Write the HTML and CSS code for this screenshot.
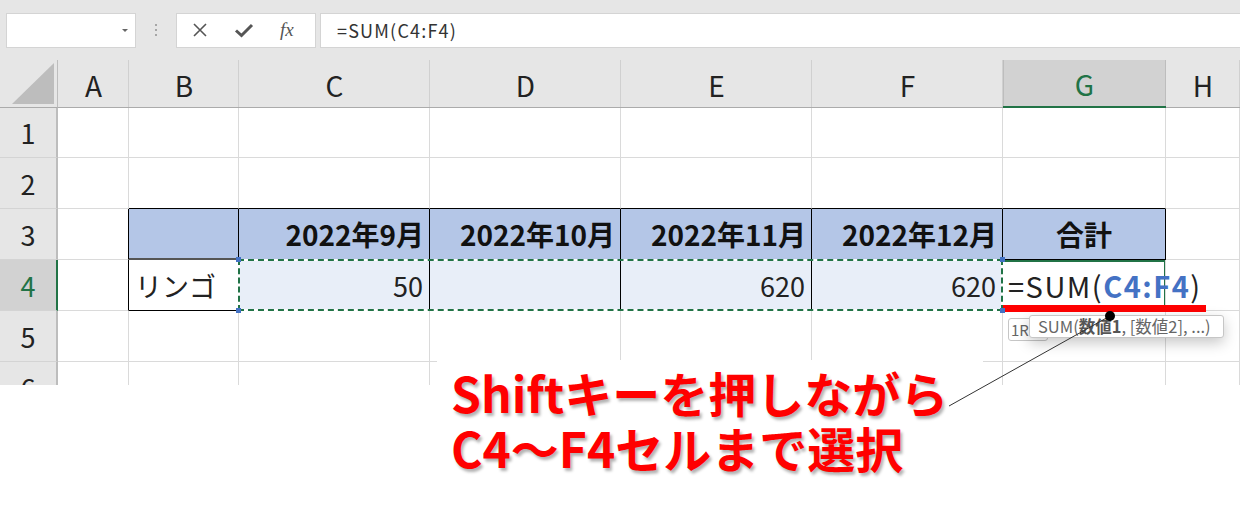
FILE: index.html
```html
<!DOCTYPE html>
<html lang="ja">

<head>
  <meta charset="UTF-8">
  <meta name="viewport" content="width=device-width, initial-scale=1.0">
  <title>SUM関数 範囲選択</title>
  <link rel="stylesheet" href="styles.css">
</head>

<body>
  <div class="toolbar">
    <div class="name-box"><span class="drop"></span></div>
    <div class="grip"><i></i><i></i><i></i></div>
    <div class="fx-buttons">
      <svg class="ico" width="16" height="16" viewBox="0 0 16 16"><path d="M2 2L14 14M14 2L2 14" stroke="#555" stroke-width="1.6" fill="none"/></svg>
      <svg class="ico" width="20" height="16" viewBox="0 0 20 16"><path d="M2 8.5L7.5 13.5L18 3" stroke="#555" stroke-width="3" fill="none"/></svg>
      <span class="fx">fx</span>
    </div>
    <div class="formula-bar">=SUM(C4:F4)</div>
  </div>

  <div class="sheet">
    <!-- 列見出し -->
    <div class="corner"><span></span></div>
    <div class="col-head">A</div>
    <div class="col-head">B</div>
    <div class="col-head">C</div>
    <div class="col-head">D</div>
    <div class="col-head">E</div>
    <div class="col-head">F</div>
    <div class="col-head active">G</div>
    <div class="col-head">H</div>

    <!-- 1行目 -->
    <div class="row-head">1</div>
    <div class="cell"></div><div class="cell"></div><div class="cell"></div><div class="cell"></div>
    <div class="cell"></div><div class="cell"></div><div class="cell"></div><div class="cell"></div>

    <!-- 2行目 -->
    <div class="row-head">2</div>
    <div class="cell"></div>
    <div class="cell above"></div><div class="cell above"></div><div class="cell above"></div>
    <div class="cell above"></div><div class="cell above"></div><div class="cell above"></div>
    <div class="cell"></div>

    <!-- 3行目 -->
    <div class="row-head">3</div>
    <div class="cell before"></div>
    <div class="cell th first"></div>
    <div class="cell th num">2022年9月</div>
    <div class="cell th num">2022年10月</div>
    <div class="cell th num">2022年11月</div>
    <div class="cell th num">2022年12月</div>
    <div class="cell th">合計</div>
    <div class="cell"></div>

    <!-- 4行目 -->
    <div class="row-head active">4</div>
    <div class="cell before"></div>
    <div class="cell td">リンゴ</div>
    <div class="cell td sel num">50</div>
    <div class="cell td sel num"></div>
    <div class="cell td sel num">620</div>
    <div class="cell td sel num">620</div>
    <div class="cell editing">=SUM(<b>C4:F4</b>)</div>
    <div class="cell"></div>

    <!-- 5行目 -->
    <div class="row-head">5</div>
    <div class="cell"></div><div class="cell"></div><div class="cell"></div><div class="cell"></div>
    <div class="cell"></div><div class="cell"></div><div class="cell"></div><div class="cell"></div>

    <!-- 6行目 -->
    <div class="row-head">6</div>
    <div class="cell"></div><div class="cell"></div><div class="cell"></div><div class="cell"></div>
    <div class="cell"></div><div class="cell"></div><div class="cell"></div><div class="cell"></div>

    <!-- C4:F4 の選択枠 -->
    <div class="ants"><i class="h tl"></i><i class="h bl"></i><i class="h tr"></i><i class="h br"></i></div>
  </div>

  <div class="underline"></div>
  <div class="hint-ref">1R</div>
  <div class="hint">SUM(<b>数値1</b>, [数値2], ...)</div>

  <div class="note">Shiftキーを押しながら<br>C4〜F4セルまで選択</div>

  <svg class="leader" width="1240" height="516" viewBox="0 0 1240 516">
    <line x1="949" y1="406" x2="1110" y2="316" stroke="#333" stroke-width="1"/>
    <circle cx="1110" cy="316" r="5" fill="#000"/>
  </svg>
</body>

</html>
```

FILE: styles.css
```css
body {
  margin: 0;
  background: #fff;
  font-family: "Noto Sans CJK JP", "Noto Sans", sans-serif;
  color: #222;
  position: relative;
  width: 1240px;
  height: 516px;
  overflow: hidden;
}

/* 数式バー */
.toolbar {
  height: 60px;
  background: #e6e6e6;
  display: flex;
  align-items: center;
  padding-left: 6px;
  box-sizing: border-box;
}

.name-box {
  width: 130px;
  height: 35px;
  background: #fff;
  border: 1px solid #d4d4d4;
  box-sizing: border-box;
  display: flex;
  align-items: center;
  justify-content: flex-end;
  padding-right: 7px;
}

.drop {
  width: 0;
  height: 0;
  border-left: 3px solid transparent;
  border-right: 3px solid transparent;
  border-top: 3px solid #666;
}

.grip {
  width: 40px;
  display: flex;
  flex-direction: column;
  align-items: center;
  gap: 3px;
}

.grip i {
  width: 2px;
  height: 2px;
  background: #a6a6a6;
}

.fx-buttons {
  width: 140px;
  height: 35px;
  background: #fff;
  border: 1px solid #d4d4d4;
  box-sizing: border-box;
  display: flex;
  align-items: center;
  padding-left: 15px;
  gap: 28px;
}

.fx-buttons .ico:nth-child(2) {
  margin-left: -2px;
}

.fx {
  font-family: "Liberation Serif", serif;
  font-style: italic;
  font-size: 19px;
  color: #555;
  margin-left: -2px;
}

.formula-bar {
  flex: 1;
  height: 35px;
  margin-left: 4px;
  background: #fff;
  border: 1px solid #d4d4d4;
  border-right: none;
  box-sizing: border-box;
  font-size: 18px;
  letter-spacing: 1.2px;
  line-height: 33px;
  padding-left: 16px;
  color: #333;
}

/* シート */
.sheet {
  display: grid;
  grid-template-columns: 58px 71px 110px 191px 191px 191px 191px 163px 1fr;
  grid-template-rows: 48px 50px 51px 51px 51px 51px 51px;
  height: 325px;
  overflow: hidden;
  position: relative;
}

.corner {
  background: #e6e6e6;
  border-right: 1px solid #bdbdbd;
  border-bottom: 1px solid #ababab;
  position: relative;
}

.corner span {
  position: absolute;
  right: 3px;
  bottom: 3px;
  width: 0;
  height: 0;
  border-left: 42px solid transparent;
  border-bottom: 41px solid #bdbdbd;
}

.col-head {
  background: #e6e6e6;
  border-bottom: 1px solid #ababab;
  box-shadow: inset -1px 0 0 #d0d0d0;
  font-size: 28px;
  display: flex;
  align-items: center;
  justify-content: center;
  padding-top: 2px;
}

.col-head.active {
  background: #d2d2d2;
  color: #217346;
  border-bottom: 2px solid #217346;
  box-shadow: inset -1px 0 0 #bdbdbd, inset 1px 0 0 #bdbdbd;
}

.row-head {
  background: #e6e6e6;
  border-right: 2px solid #bdbdbd;
  border-bottom: 1px solid #d4d4d4;
  font-size: 27px;
  display: flex;
  align-items: center;
  justify-content: center;
}

.row-head.active {
  background: #d2d2d2;
  color: #217346;
  border-right-color: #217346;
}

.cell {
  border-right: 1px solid #dadada;
  border-bottom: 1px solid #dadada;
  font-size: 27px;
  display: flex;
  align-items: center;
  padding: 0 6px;
  white-space: nowrap;
  min-width: 0;
}

.cell.above {
  border-bottom-color: #000;
}

.cell.before {
  border-right-color: #000;
}

.th {
  background: #b4c6e7;
  border-color: #000;
  font-weight: 700;
  font-size: 28px;
  justify-content: center;
  color: #111;
  padding: 0 5px;
}

.th.first {
  border-bottom: 2px solid #555;
}

.td {
  border-color: #000;
  color: #222;
}

.num {
  justify-content: flex-end;
}

.sel {
  background: #e8eef8;
}

.editing {
  box-shadow: inset 0 2px 0 #217346, inset -1px 0 0 #217346;
  padding-left: 5px;
  font-size: 29px;
  letter-spacing: 1.5px;
  color: #222;
}

.editing b {
  color: #4472c4;
  font-weight: 700;
}

/* 点線の選択範囲 */
.ants {
  grid-column: 4 / 8;
  grid-row: 5 / 6;
  position: absolute;
  inset: -1px 0 0 -1px;
}

.ants::before,
.ants::after {
  content: "";
  position: absolute;
  inset: 0;
  border: 2px solid #fff;
}

.ants::after {
  border: 2px dashed #217346;
}

.ants .h {
  position: absolute;
  width: 5px;
  height: 5px;
  background: #4472c4;
  z-index: 1;
}

.ants .tl { left: -2px; top: -2px; }
.ants .bl { left: -2px; bottom: -2px; }
.ants .tr { right: -2px; top: -2px; }
.ants .br { right: -2px; bottom: -2px; }

/* 注釈 */
.underline {
  position: absolute;
  left: 1003px;
  top: 305px;
  width: 203px;
  height: 7px;
  background: #ff0000;
}

.hint-ref {
  position: absolute;
  left: 1008px;
  top: 318px;
  width: 40px;
  height: 23px;
  border: 1px solid #c6c6c6;
  border-radius: 3px;
  background: #fff;
  box-sizing: border-box;
  font-size: 15px;
  line-height: 22px;
  padding-left: 2px;
  color: #666;
}

.hint {
  position: absolute;
  left: 1029px;
  top: 315px;
  width: 195px;
  height: 23px;
  border: 1px solid #c6c6c6;
  border-radius: 3px;
  background: #fff;
  box-sizing: border-box;
  box-shadow: 0 5px 14px rgba(0, 0, 0, 0.22);
  font-size: 16.5px;
  line-height: 20px;
  padding-left: 8px;
  color: #666;
  white-space: nowrap;
}

.hint b {
  color: #555;
}

.note {
  position: absolute;
  left: 437px;
  top: 360px;
  width: 546px;
  height: 156px;
  background: #fff;
  box-sizing: border-box;
  padding: 5px 0 0 14px;
  font-size: 48px;
  line-height: 55px;
  font-weight: 700;
  color: #ff0000;
  text-shadow: 2px 3px 3px rgba(0, 0, 0, 0.3);
  white-space: nowrap;
}

.leader {
  position: absolute;
  left: 0;
  top: 0;
  pointer-events: none;
}
```
